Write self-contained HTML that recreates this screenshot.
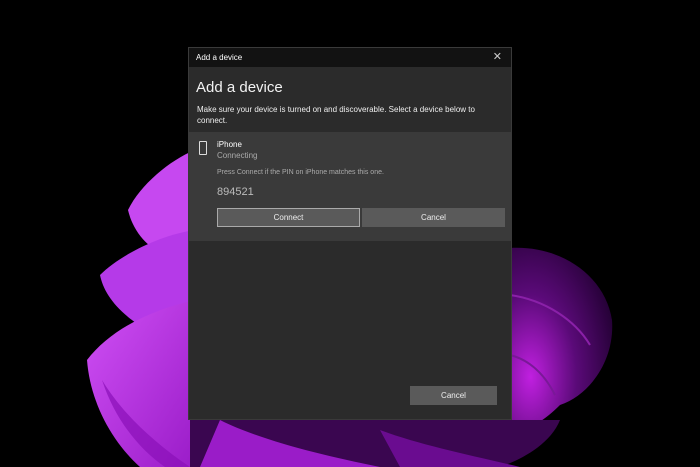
<!DOCTYPE html>
<html><head><style>
*{margin:0;padding:0;box-sizing:border-box}
body{width:700px;height:467px;background:#000;position:relative;overflow:hidden;font-family:"Liberation Sans",sans-serif;color:#fff}
.dlg{position:absolute;left:188px;top:47px;width:324px;height:373px;background:#2b2b2b;border:1px solid #3a3a3a}
.tb{height:19px;background:#121212;font-size:8px;padding:5px 7px;position:relative}
.x{position:absolute;right:9px;top:2px;font-size:11px;color:#ccc}
.h{font-size:15px;position:absolute;left:7px;top:31px;color:#f2f2f2}
.d{font-size:8px;position:absolute;left:8px;top:56px;width:310px;line-height:11px;color:#eee}
.panel{position:absolute;left:0;top:84px;width:322px;height:109px;background:#3a3a3a}
.btn{position:absolute;height:19px;background:#5a5a5a;font-size:8px;text-align:center;line-height:19px;color:#eee}
</style></head><body>
<svg width="700" height="467" style="position:absolute;left:0;top:0">
<defs>
<linearGradient id="g" x1="0" y1="0" x2="1" y2="1"><stop offset="0" stop-color="#d050f5"/><stop offset="1" stop-color="#9a1cc8"/></linearGradient>
<radialGradient id="r" cx="0.2" cy="0.7" r="0.9"><stop offset="0" stop-color="#c020e0"/><stop offset="0.5" stop-color="#5a0a78"/><stop offset="1" stop-color="#200030"/></radialGradient>
</defs>
<!-- left petals -->
<path d="M195 150 C170 160 140 185 128 210 C135 240 160 260 195 265Z" fill="#c648f0"/>
<path d="M195 230 C160 235 120 255 100 275 C105 300 130 330 195 350Z" fill="#b53ae8"/>
<path d="M195 300 C150 310 110 330 87 360 C90 400 110 440 140 467 L195 467Z" fill="url(#g)"/>
<path d="M102 380 C115 420 140 450 165 467 L190 467 C150 440 120 410 102 380Z" fill="#8a10b8" opacity=".7"/>
<!-- right -->
<path d="M510 248 C560 245 605 275 612 320 C615 360 590 395 560 405 C545 420 530 430 510 432Z" fill="url(#r)"/>
<path d="M510 295 C545 300 575 320 590 345" stroke="#8a20a8" stroke-width="2" fill="none"/>
<path d="M510 355 C530 360 545 375 555 395" stroke="#7a1898" stroke-width="2" fill="none"/>
<!-- bottom -->
<path d="M190 420 L560 420 C550 445 520 460 500 467 L190 467Z" fill="#3a0650"/>
<path d="M220 420 C260 440 320 455 380 467 L200 467Z" fill="#9a1cc8"/>
<path d="M380 430 C420 445 470 455 520 467 L400 467Z" fill="#6a0c90"/>
</svg>
<div class="dlg">
<div class="tb">Add a device<span class="x">✕</span></div>
<div class="h">Add a device</div>
<div class="d">Make sure your device is turned on and discoverable. Select a device below to connect.</div>
<div class="panel">
<div style="position:absolute;left:10px;top:9px;width:8px;height:14px;border:1.2px solid #ddd;border-radius:1px"></div>
<div style="position:absolute;left:28px;top:8px;font-size:8px">iPhone</div>
<div style="position:absolute;left:28px;top:19px;font-size:8px;color:#aaa">Connecting</div>
<div style="position:absolute;left:28px;top:37px;font-size:7px;color:#aaa">Press Connect if the PIN on iPhone matches this one.</div>
<div style="position:absolute;left:28px;top:54px;font-size:11px;color:#bbb">894521</div>
<div class="btn" style="left:28px;top:76px;width:143px;border:1px solid #aaa;line-height:17px">Connect</div>
<div class="btn" style="left:173px;top:76px;width:143px">Cancel</div>
</div>
<div class="btn" style="left:221px;top:338px;width:87px">Cancel</div>
</div>
</body></html>
